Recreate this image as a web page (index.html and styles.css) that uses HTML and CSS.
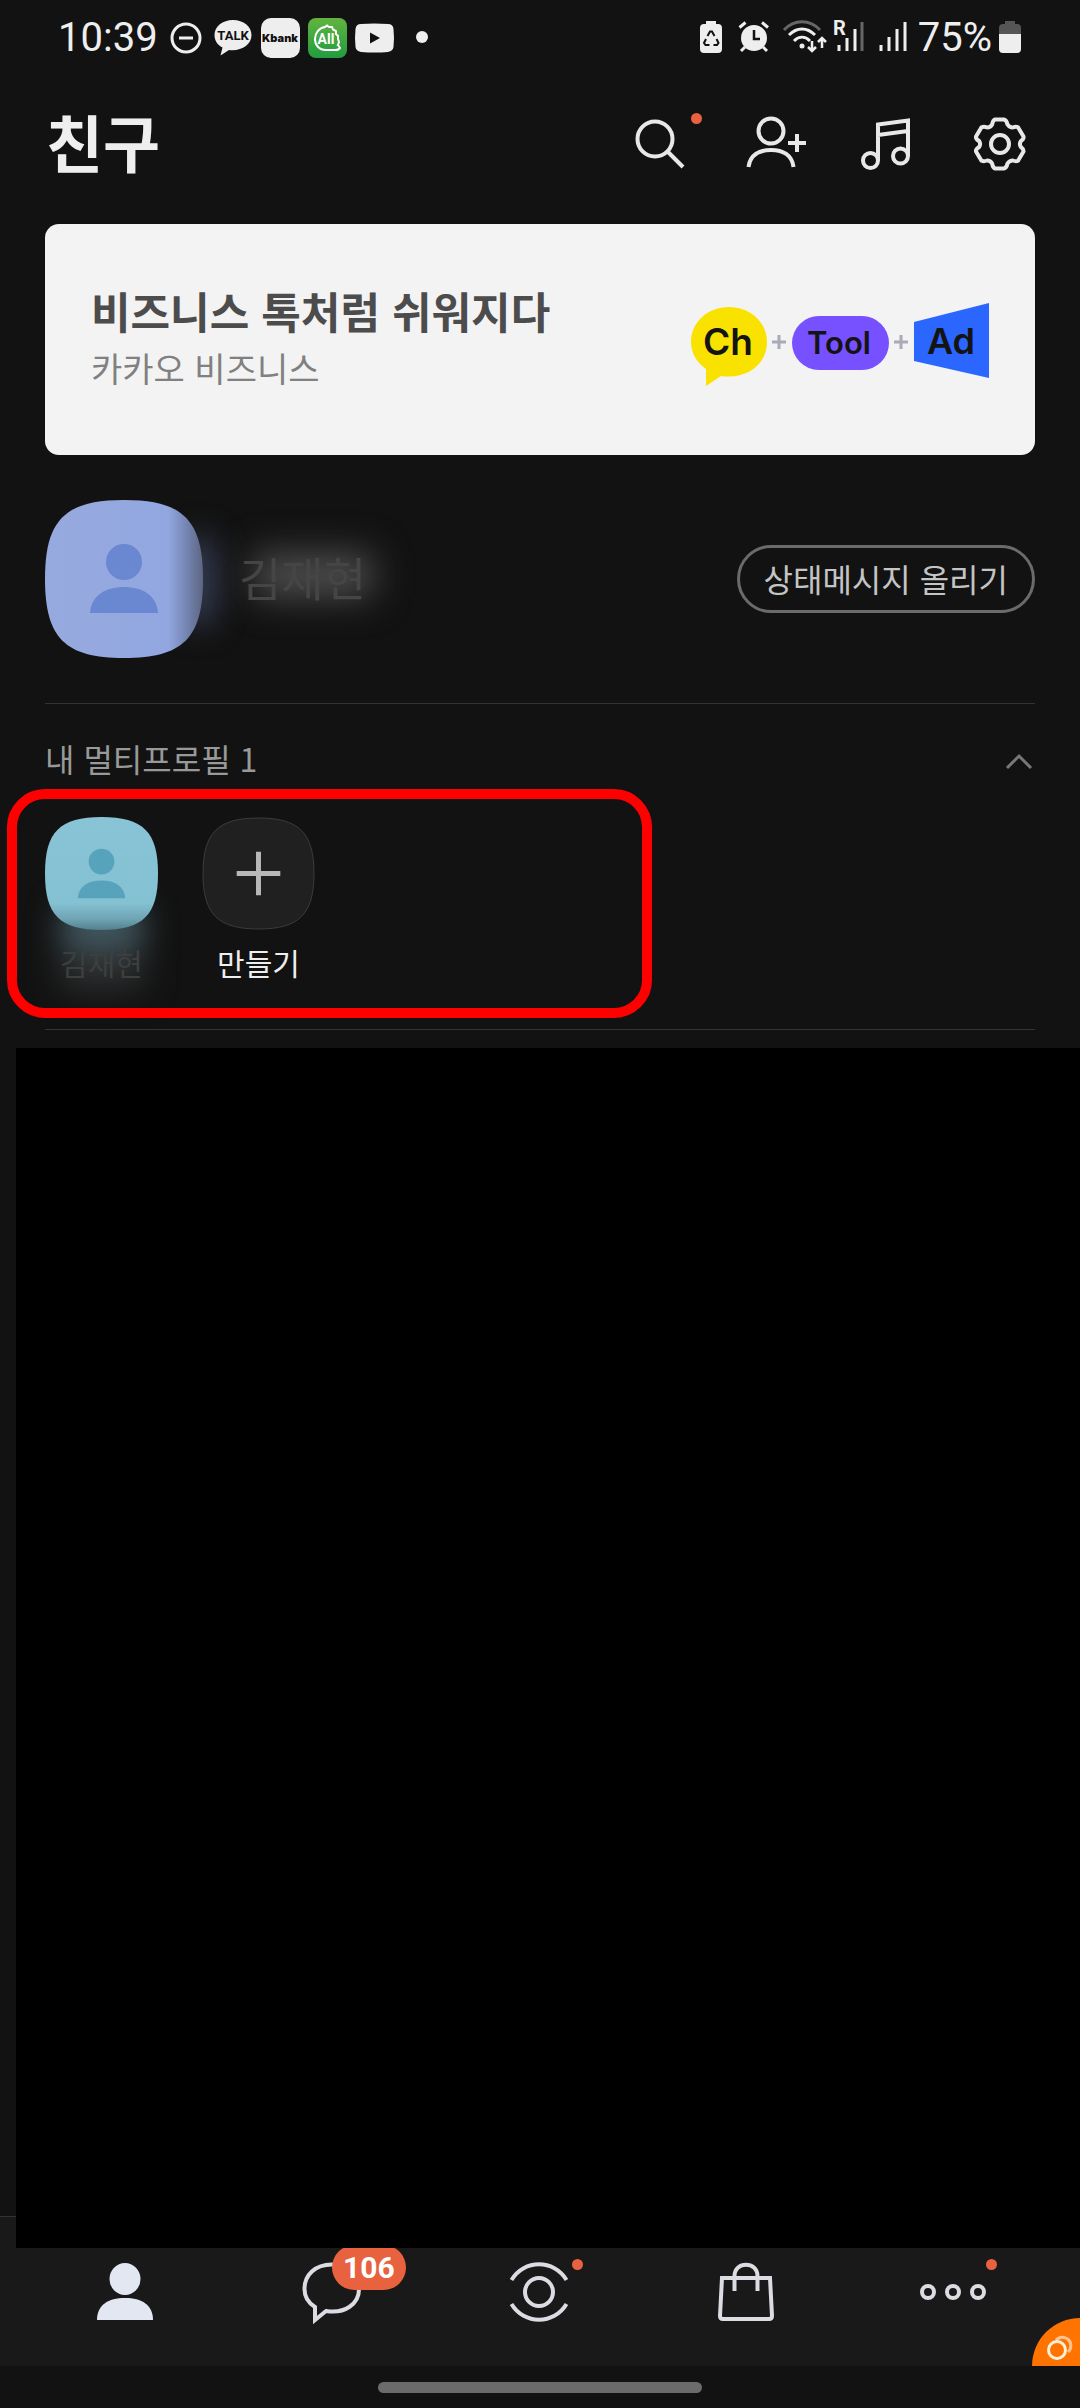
FILE: index.html
```html
<!DOCTYPE html>
<html lang="ko">
<head>
<meta charset="utf-8">
<meta name="viewport" content="width=device-width, initial-scale=1">
<title>친구</title>
<link rel="stylesheet" href="styles.css">
</head>
<body>
<div class="app">
  <div class="status">
    <div class="status-left">
      <span class="clock">10:39</span>
      <div class="status-icons">
        <svg width="40" height="40" viewBox="0 0 40 40"><circle cx="20" cy="20" r="14" fill="none" stroke="#eee" stroke-width="3"/><path d="M13 20h14" stroke="#eee" stroke-width="3"/></svg>
        <svg width="40" height="40" viewBox="0 0 40 40"><path d="M20 2C9.500 2 1.500 8.500 1.500 17c0 5.500 3 10 8 12.500l-2 8 8.500-5.500c12 1.500 22.500-5 22.500-15C38.500 8.500 30.500 2 20 2z" fill="#eee"/><text class="talk" x="20" y="22" text-anchor="middle">TALK</text></svg>
        <svg width="40" height="40" viewBox="0 0 40 40"><rect x="1" width="39" height="40" rx="10" fill="#eee"/><text class="kbank" x="20" y="24" text-anchor="middle">Kbank</text></svg>
        <svg width="40" height="40" viewBox="0 0 40 40"><defs><linearGradient id="leaf" x2="0" y2="1"><stop stop-color="#62b43f"/><stop offset="1" stop-color="#219c40"/></linearGradient></defs><rect x="1" width="39" height="40" rx="8" fill="url(#leaf)"/><path d="M31 27l2 3q-1 2-5 2H19C12 32 8 27 8 21c0-6 4-11 10-12l2-1.500 2 1.500 3 0 1 2.500 3 1.500 0 3 2 2 0 3 1 3-1.500 4" fill="none" stroke="#fff" stroke-width="2"/><text class="all" x="19" y="26" text-anchor="middle">All</text></svg>
        <svg width="40" height="40" viewBox="0 0 40 40"><path d="M7 6q13-1 27 0 5 0 5.500 5 1 9 0 18-.5 4-5.500 5-13 1-27 0-5-1-5.500-5-1-9 0-18Q2 6 7 6z" fill="#eee"/><path d="M16 14.500v11l10-5.500z" fill="#111"/></svg>
        <svg width="40" height="40" viewBox="0 0 40 40"><circle cx="21" cy="19" r="6" fill="#eee"/></svg>
      </div>
    </div>
    <div class="status-right">
      <svg width="40" height="40" viewBox="0 0 40 40"><path d="M23 3h10v3h2a4 4 0 0 1 4 4v21a4 4 0 0 1-4 4H21a4 4 0 0 1-4-4V10a4 4 0 0 1 4-4h2z" fill="#eee"/><path d="M24.500 18l2.500-4.500h2l2.500 4.500M33.500 21l2 4-1.500 2h-3.500M26.500 27h-4l-1.500-2 2-4" fill="none" stroke="#111" stroke-width="2"/></svg>
      <svg width="40" height="40" viewBox="0 0 40 40"><circle cx="24" cy="20" r="13" fill="#eee"/><path d="M9.500 9.500l6-5M38 9.500l-6-5M15 29l-4 4M33 29l4 4" stroke="#eee" stroke-width="3"/><path d="M24 12v9h6" fill="none" stroke="#111" stroke-width="2.500"/></svg>
      <svg width="48" height="40" viewBox="0 0 48 40"><g fill="none"><path d="M7 12c10-11 26-11 36 0" stroke="#666" stroke-width="3"/><path d="M12 17c8-8 18-8 26 0M17 23c5-5 11-5 16 0" stroke="#eee" stroke-width="3"/><path d="M35 23v10m-4-4l4 4 4-4M45 30V20m-4 4l4-4 4 4" stroke="#eee" stroke-width="2.500"/></g><circle cx="25" cy="28" r="2.500" fill="#eee"/></svg>
      <svg width="40" height="40" viewBox="0 0 40 40"><text class="roam" x="1" y="17">R</text><path d="M7 27v6M15 20v13M23 11v22" stroke="#eee" stroke-width="3"/><path d="M30 4v29" stroke="#666" stroke-width="3"/></svg>
      <svg width="32" height="40" viewBox="0 0 32 40"><path d="M2 27v6M10 19v14M18 11v22M26 4v29" stroke="#eee" stroke-width="3"/></svg>
      <span class="clock">75%</span>
      <svg width="22" height="40" viewBox="0 0 22 40"><path d="M6 3h10v3h2a4 4 0 0 1 4 4v6H0v-6a4 4 0 0 1 4-4h2z" fill="#555"/><path d="M0 16h22v15a4 4 0 0 1-4 4H4a4 4 0 0 1-4-4z" fill="#eee"/></svg>
    </div>
  </div>

  <header class="header">
    <h1>친구</h1>
    <div class="actions">
      <button type="button" aria-label="검색"><svg width="68" height="68" viewBox="0 0 68 68"><circle cx="31" cy="29" r="17.500"/><path d="M43.500 41.500L59 57"/></svg><span class="dot"></span></button>
      <button type="button" aria-label="친구 추가"><svg width="68" height="68" viewBox="0 0 68 68"><circle cx="33" cy="21" r="12.500"/><path d="M10.500 57C12 45 21 40 33 40s21 5 22.500 17M59 24v18M50 33h18"/></svg></button>
      <button type="button" aria-label="음악"><svg width="68" height="68" viewBox="0 0 68 68"><circle cx="18.500" cy="50.500" r="7.500"/><circle cx="48.500" cy="46" r="7.500"/><path d="M26 50V14.500L56 10.500V46M26 25l30-4"/></svg></button>
      <button type="button" aria-label="설정"><svg width="68" height="68" viewBox="0 0 68 68"><path stroke-linejoin="round" d="M29 9.500H38Q40.500 10 41.500 14.500Q43.500 17.500 46.900 17.500Q50 16.300 52 17.300L57.500 26.500Q58 29 54.800 31.100Q53 34 54.800 36.900Q58 39.500 57.500 41.500L52 50.700Q50 51.700 46.900 50.500Q43.500 50.500 41.500 53.500Q40.500 58 38 58.500H29Q27 58 26.100 53.500Q24.500 50.500 21.100 50.500Q18 51.700 15.500 50.700L10 41.500Q9.500 39 13.200 36.900Q15 34 13.200 31.100Q9.500 29 10 26.500L15.500 17.300Q18 16.300 21.100 17.500Q24.500 17.500 26.100 14.500Q27 10 29 9.500Z"/><circle cx="34" cy="34" r="9"/></svg></button>
    </div>
  </header>

  <main class="content">
    <a class="banner" href="#business">
      <span class="banner-text"><strong>비즈니스 톡처럼 쉬워지다</strong><span>카카오 비즈니스</span></span>
      <svg class="banner-art" width="300" height="82" viewBox="0 0 300 82">
        <path d="M40 8C19 8 2 23 2 43c0 11 6 21 15 27v17l15-10c26 4 46-12 46-34C78 23 61 8 40 8z" fill="#f9e200"/>
        <path d="M90 36v14M83 43h14M212 36v14M205 43h14" stroke="#a9abb8" stroke-width="3"/>
        <rect x="103" y="17" width="97" height="54" rx="27" fill="#7750ff"/>
        <path d="M225 23l75-19v75l-75-17z" fill="#2b66ff"/>
        <text x="39" y="56" font-size="37" text-anchor="middle">Ch</text>
        <text x="150" y="55" font-size="31" text-anchor="middle">Tool</text>
        <text x="262" y="55" font-size="36" text-anchor="middle">Ad</text>
      </svg>
    </a>

    <section class="me">
      <svg class="me-avatar" width="158" height="158" viewBox="0 0 158 158">
        <defs><linearGradient id="blue"><stop stop-color="#97aadf"/><stop offset=".78" stop-color="#92a7e0"/><stop offset=".9" stop-color="#7484b0"/><stop offset="1" stop-color="#5c6683"/></linearGradient></defs>
        <path d="M79 0C138 0 158 20 158 79S138 158 79 158 0 138 0 79 20 0 79 0z" fill="url(#blue)"/>
        <g fill="#6a87d2"><circle cx="79" cy="62" r="18"/><path d="M45 113c1-17 15-26 34-26s33 9 34 26z"/></g>
      </svg>
      <span class="me-name">김재현</span>
      <button class="message" type="button">상태메시지 올리기</button>
    </section>

    <section class="multi">
      <div class="multi-head">
        <h2>내 멀티프로필 1</h2>
        <button type="button" aria-label="접기"><svg width="34" height="34" viewBox="0 0 34 34"><path d="M6 25L18 13l12 12" fill="none" stroke="#777" stroke-width="3"/></svg></button>
      </div>
      <div class="profiles">
        <button class="profile veiled" type="button">
          <svg width="113" height="113" viewBox="0 0 114 114">
            <defs><linearGradient id="teal" x2="0" y2="1"><stop stop-color="#88c4d6"/><stop offset=".76" stop-color="#84c1d3"/><stop offset=".9" stop-color="#6fa5b5"/><stop offset="1" stop-color="#54808d"/></linearGradient></defs>
            <path d="M57 0C99 0 114 15 114 57S99 114 57 114 0 99 0 57 15 0 57 0z" fill="url(#teal)"/>
            <g fill="#57a3bc"><circle cx="57" cy="45" r="13"/><path d="M33 82c1-12 10-18 24-18s23 6 24 18z"/></g>
          </svg>
          <span>김재현</span>
        </button>
        <button class="profile" type="button">
          <svg width="113" height="113" viewBox="0 0 114 114">
            <path d="M57 1C98 1 113 16 113 57S98 113 57 113 1 98 1 57 16 1 57 1z" fill="#202020" stroke="#3c3c3c"/>
            <path d="M57 35v44M35 57h44" stroke="#b8b8b8" stroke-width="5"/>
          </svg>
          <span>만들기</span>
        </button>
      </div>
      <div class="highlight"></div>
    </section>
  </main>

  <div class="cover"></div>

  <nav class="tabs">
    <a href="#friends" aria-label="친구"><svg width="64" height="64" viewBox="0 0 64 64"><g fill="#e2e7f1"><ellipse cx="32" cy="19" rx="15.500" ry="16"/><path d="M4 60c0-15 11-22 28-22s28 7 28 22z"/></g></svg></a>
    <a href="#chats" aria-label="채팅"><svg width="64" height="64" viewBox="0 0 64 64"><path d="M32 4.500C15 4.500 4.500 15 4.500 29c0 8 4 14 10.500 18v13l11-9c19 3 33-7 33-22C59 15 49 4.500 32 4.500z"/></svg><span class="badge">106</span></a>
    <a href="#views" aria-label="뷰"><svg width="64" height="64" viewBox="0 0 64 64"><circle cx="32" cy="32" r="14"/><path d="M4.500 20C17-1 47-1 59.500 20M4.500 44C17 65 47 65 59.500 44"/></svg><span class="dot"></span></a>
    <a href="#shopping" aria-label="쇼핑"><svg width="64" height="64" viewBox="0 0 64 64"><path d="M8 18h48l2 38q0 3-3 3H9q-3 0-3-3zM20.500 31V16c0-15 23-15 23 0v15"/></svg></a>
    <a href="#more" aria-label="더보기"><svg width="64" height="64" viewBox="0 0 64 64"><circle cx="7" cy="32" r="6"/><circle cx="32" cy="32" r="6"/><circle cx="57" cy="32" r="6"/></svg><span class="dot"></span></a>
    <button class="assist" type="button" aria-label="바로가기"><svg width="48" height="48" viewBox="0 0 48 48" fill="none" stroke-width="3"><path d="M24 22a8.500 8.500 0 1 1 12 12" stroke="#ffc48f"/><circle cx="25" cy="32" r="8.500" stroke="#fff0d8"/></svg></button>
  </nav>
  <div class="home"><span></span></div>
</div>
</body>
</html>
```
FILE: styles.css
```css
* { box-sizing: border-box; }

body {
  margin: 0;
  background: #121212;
  color: #eee;
  font-family: "Noto Sans CJK KR", sans-serif;
}

h1, h2 { margin: 0; }

button {
  margin: 0;
  padding: 0;
  border: 0;
  background: none;
  color: inherit;
  font: inherit;
}

a { color: inherit; text-decoration: none; }

svg { display: block; overflow: visible; flex: none; }

.app {
  display: flex;
  flex-direction: column;
  min-height: 100vh;
}

/* status bar */
.status {
  display: flex;
  justify-content: space-between;
  align-items: center;
  height: 76px;
  padding: 0 59px 0 58px;
}

.status-left { display: flex; align-items: center; gap: 8px; }
.status-icons, .status-right { display: flex; align-items: center; gap: 7px; }

.clock { font: 40px/40px Roboto, sans-serif; }

.talk { font: bold 13px Roboto, sans-serif; fill: #111; }
.kbank { font: 900 11px Inter, sans-serif; fill: #111; }
.all { font: bold 14px Roboto, sans-serif; fill: #fff; }
.roam { font: bold 20px Roboto, sans-serif; fill: #eee; }

/* title row */
.header {
  display: flex;
  justify-content: space-between;
  align-items: center;
  height: 136px;
  padding: 0 46px;
}

h1 { padding-bottom: 6px; font-size: 62px; line-height: 80px; }

.actions { display: flex; gap: 46px; }
.actions button { position: relative; }
.actions svg { fill: none; stroke: #e8e8e8; stroke-width: 4; }

.dot {
  position: absolute;
  width: 11px;
  height: 11px;
  border-radius: 50%;
  background: #e8623f;
}

.actions .dot { top: 3px; left: 67px; }

.content { padding: 12px 45px 0; }

/* promotion */
.banner {
  display: flex;
  justify-content: space-between;
  align-items: center;
  height: 231px;
  padding: 0 46px;
  border-radius: 14px;
  background: #f3f3f3;
}

.banner-text { display: flex; flex-direction: column; gap: 4px; padding-bottom: 4px; }
.banner-text strong { color: #4c4c4c; font-size: 43px; line-height: 56px; }
.banner-text span { color: #808080; font-size: 34px; line-height: 52px; }
.banner-art { font-family: Inter, sans-serif; font-weight: 600; fill: #141414; }

/* own profile */
.me {
  position: relative;
  display: flex;
  align-items: center;
  gap: 36px;
  padding: 45px 0;
  border-bottom: 1px solid #333;
}

/* soft glow between the picture and the name, and under the name */
.me::before, .me::after {
  content: "";
  position: absolute;
}

.me::before {
  top: 82px;
  left: 140px;
  width: 28px;
  height: 88px;
  border-radius: 20px;
  background: #3f4864;
  filter: blur(16px);
}

.me::after {
  top: 98px;
  left: 208px;
  width: 120px;
  height: 44px;
  background: #4e4e4e;
  filter: blur(18px);
}

.me-avatar { position: relative; z-index: 1; }

.me-name {
  position: relative;
  z-index: 1;
  flex: 1;
  padding-bottom: 6px;
  color: #454545;
  font-size: 46px;
  line-height: 60px;
}

.message {
  height: 68px;
  padding: 0 24px 2px;
  border: 3px solid #6b6b6b;
  border-radius: 34px;
  color: #c4c4c4;
  font-size: 32px;
  line-height: 48px;
}

/* multi profiles */
.multi {
  position: relative;
  padding: 28px 0 44px;
  border-bottom: 1px solid #333;
}

.multi-head {
  display: flex;
  justify-content: space-between;
  align-items: center;
  height: 56px;
}

h2 { padding-bottom: 4px; color: #999; font-size: 32px; font-weight: 400; line-height: 48px; }

.profiles { display: flex; gap: 44px; padding-top: 29px; }

.profile {
  position: relative;
  display: flex;
  flex-direction: column;
  align-items: center;
  gap: 10px;
  font-size: 30px;
  line-height: 45px;
}

.profile svg, .profile span { position: relative; z-index: 1; }

.veiled { color: #3e3e3e; }

.veiled::before {
  content: "";
  position: absolute;
  top: 92px;
  left: 16px;
  width: 82px;
  height: 82px;
  background: linear-gradient(#4a6872 20%, #2c3133 60%, #2a2a2a);
  filter: blur(16px);
}

.highlight {
  position: absolute;
  top: 85px;
  left: -38px;
  width: 645px;
  height: 229px;
  border: 10px solid #f00;
  border-radius: 38px;
  pointer-events: none;
}

/* blacked-out list, laid over the top of the tab bar */
.cover {
  position: relative;
  z-index: 2;
  flex: 1;
  min-height: 200px;
  margin: 18px 0 -32px 16px;
  background: #000;
}

/* tab bar */
.tabs {
  position: relative;
  display: grid;
  grid-template-columns: repeat(5, 1fr);
  height: 150px;
  padding: 0 23px 0 21px;
  border-top: 1px solid #333;
  background: #191919;
  overflow: hidden;
}

.tabs a {
  position: relative;
  display: flex;
  justify-content: center;
  align-items: center;
}

.tabs a svg { fill: none; stroke: #dcdde3; stroke-width: 4; }
.tabs a g { stroke: none; }
.tabs .dot { top: 42px; left: calc(50% + 33px); }

.badge {
  position: absolute;
  top: 28px;
  left: 50%;
  width: 74px;
  border-radius: 23px;
  background: #e8623f;
  color: #fff;
  font: bold 30px/45px Roboto, sans-serif;
  text-align: center;
}

.assist {
  position: absolute;
  right: -48px;
  bottom: -48px;
  width: 96px;
  height: 96px;
  border-radius: 50%;
  background: #ff7300;
}

.assist svg { position: absolute; top: 0; left: 0; }

.home {
  display: flex;
  justify-content: center;
  padding: 16px 0 15px;
}

.home span {
  width: 30%;
  height: 11px;
  border-radius: 6px;
  background: #6b6b6b;
}
```
